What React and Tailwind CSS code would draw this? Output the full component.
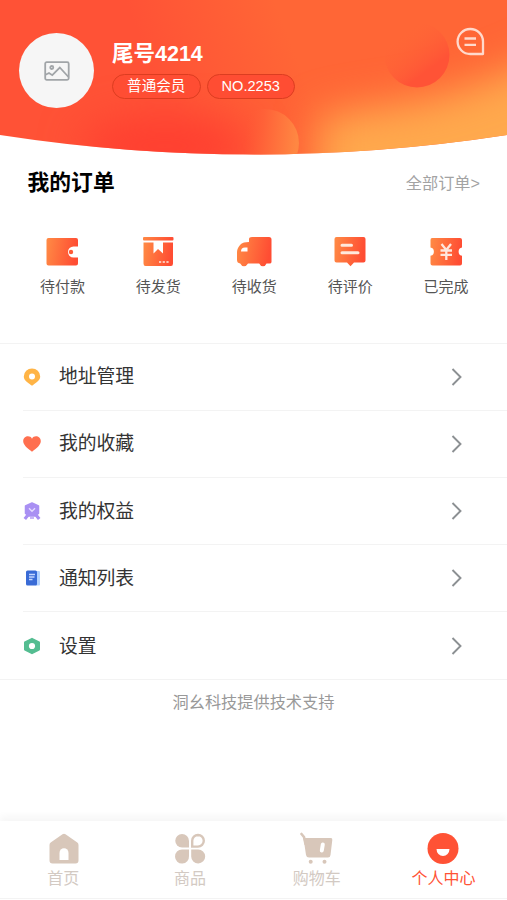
function HeaderArt() {
  return (
    <svg className="absolute inset-0 h-full w-full" viewBox="0 0 507 156" preserveAspectRatio="none">
      <defs>
        <linearGradient id="base" gradientUnits="userSpaceOnUse" x1="160" y1="90" x2="290" y2="40">
          <stop offset="0" stopColor="#ff5236" />
          <stop offset="1" stopColor="#ff6636" />
        </linearGradient>
        <linearGradient id="ball" x1="0.2" y1="0.1" x2="0.75" y2="0.85">
          <stop offset="0.1" stopColor="#ff6637" stopOpacity="0" />
          <stop offset="0.85" stopColor="#ff5336" />
        </linearGradient>
        <linearGradient id="ball2" x1="0" y1="0" x2="1" y2="0.1">
          <stop offset="0.25" stopColor="#ff5a36" stopOpacity="0" />
          <stop offset="0.5" stopColor="#ff6238" />
          <stop offset="1" stopColor="#ff8742" />
        </linearGradient>
        <filter id="soft" x="-50%" y="-80%" width="200%" height="260%" colorInterpolationFilters="sRGB">
          <feGaussianBlur stdDeviation="20" />
        </filter>
        <clipPath id="curve">
          <path d="M0 0H507V135Q380 154.500 254 154.500Q127 154.500 0 135Z" />
        </clipPath>
      </defs>
      <g clipPath="url(#curve)">
        <rect width="507" height="156" fill="url(#base)" />
        <ellipse cx="165" cy="146" rx="85" ry="28" fill="#ff3e30" filter="url(#soft)" />
        <path d="M318 220V118Q360 108 410 102Q470 92 570 44V220Z" fill="#ffa94d" filter="url(#soft)" />
        <circle cx="265" cy="143" r="34" fill="url(#ball2)" />
        <circle cx="417" cy="55" r="32.500" fill="url(#ball)" />
      </g>
    </svg>
  )
}

function IconDefs() {
  return (
    <svg className="absolute h-0 w-0">
      <defs>
        <linearGradient id="orange" x1="0" y1="0" x2="1" y2="0.150">
          <stop offset="0" stopColor="#ff8b45" />
          <stop offset="1" stopColor="#ff4d33" />
        </linearGradient>
      </defs>
    </svg>
  )
}

const orders = [
  {
    label: '待付款',
    icon: (
      <>
        <path fill="url(#orange)" d="M3.500 3H31Q33 3 33 5V11.500H28.500A5.500 5.500 0 0 0 28.500 22.500H33V28.500Q33 30.500 31 30.500H3.500Q1.500 30.500 1.500 28.500V5Q1.500 3 3.500 3Z" />
        <circle cx="26" cy="17" r="2.200" fill="#ff5a36" />
      </>
    ),
  },
  {
    label: '待发货',
    icon: (
      <>
        <rect x="2" y="2" width="30.500" height="3.600" rx="1" fill="url(#orange)" />
        <path fill="url(#orange)" d="M2.500 7.500H12.500V18.500L17 14L22 18.500V7.500H32V28.500Q32 31 30 31H4.500Q2.500 31 2.500 28.500Z" />
        <path d="M18 27H28" stroke="#ffc6b5" strokeWidth="1.800" strokeDasharray="2.200 1.500" />
      </>
    ),
  },
  {
    label: '待收货',
    icon: (
      <>
        <path fill="url(#orange)" d="M15 2H32Q34.500 2 34.500 4.500V27Q34.500 28.500 32.500 28.500H29.500Q28.500 31.200 26 31.200Q23.300 31.200 22.200 28.500H11Q9.500 31.200 7 31.200Q4.500 31.200 3.200 28.500Q0 28 0 25V17Q0 13 4 9Q6 7 12 7V4Q12 2 15 2Z" />
        <path d="M4 16.500Q4 12.500 8 12.500H10.500V16.500Z" fill="#fff" />
      </>
    ),
  },
  {
    label: '待评价',
    icon: (
      <>
        <path fill="url(#orange)" d="M3.500 2H30.500Q32.500 2 32.500 4V25.500Q32.500 27.500 30.500 27.500H21L17.500 31.200L14 27.500H3.500Q1.500 27.500 1.500 25.500V4Q1.500 2 3.500 2Z" />
        <path d="M9 10.300H18.500M9 17.800H25" stroke="#ffe9dc" strokeWidth="3" strokeLinecap="round" />
      </>
    ),
  },
  {
    label: '已完成',
    icon: (
      <>
        <path fill="url(#orange)" d="M3 3H31Q33 3 33 5V12.500A4 4.200 0 0 0 33 20.800V28.500Q33 30.500 31 30.500H3.500Q1.500 30.500 1.500 28.500V20.800A4 4.200 0 0 0 1.500 12.500V5Q1.500 3 3 3Z" />
        <path d="M12.500 9L17.300 15L22 9M11.500 15.500H23M11.500 19.800H23M17.300 15V25" stroke="#ffe6dc" strokeWidth="2.300" fill="none" />
      </>
    ),
  },
]

const menu = [
  {
    label: '地址管理',
    icon: (
      <>
        <path fill="#ffb446" d="M9 .5A8.200 8 0 0 1 17.200 8.500C17.200 12 14 14 9.800 17.300Q9 17.900 8.200 17.300C4 14 .8 12 .8 8.500A8.200 8 0 0 1 9 .5Z" />
        <circle cx="9" cy="8.400" r="3" fill="#fff" />
      </>
    ),
  },
  {
    label: '我的收藏',
    icon: <path fill="#ff6f4f" d="M9 3.700C11-.3 17.800.8 17.800 6.300C17.800 9.800 14 13 9 16.800C4 13 .2 9.800.2 6.300C.2.8 7 -.3 9 3.700Z" />,
  },
  {
    label: '我的权益',
    icon: (
      <>
        <path fill="none" stroke="#a990f3" strokeWidth="3.200" d="M5 13L1.800 17M13 13L16.200 17" />
        <path fill="#a990f3" stroke="#a990f3" strokeWidth="1.500" strokeLinejoin="round" d="M9 1L15.500 4V11.500L12 14H6L2.500 11.500V4Z" />
        <path d="M6 6.300L9 9.300L12 6.300" fill="none" stroke="#e5dcff" strokeWidth="1.400" />
        <path d="M7 16H11" fill="none" stroke="#c7b6f8" strokeWidth="2" />
      </>
    ),
  },
  {
    label: '通知列表',
    icon: (
      <>
        <rect x="12" y="2" width="5" height="14.500" rx="1" fill="#b3d3ff" />
        <rect x="3" y="1.500" width="11" height="15" rx="1.500" fill="#396bd6" />
        <path d="M6 5.500H12M6 8H11.500M6 10.500H9.500" stroke="#c3d6ff" strokeWidth="1.300" />
      </>
    ),
  },
  {
    label: '设置',
    icon: (
      <>
        <path fill="#54bd91" stroke="#54bd91" strokeWidth="2" strokeLinejoin="round" d="M9 1.800L16 5.500V12.500L9 16.200L2 12.500V5.500Z" />
        <circle cx="9" cy="9" r="3.100" fill="#fff" />
      </>
    ),
  },
]

const tabs = [
  {
    label: '首页',
    icon: (
      <>
        <path fill="#d8c7ba" d="M15.500 2.300Q17 1.300 18.500 2.300L30.300 10.500Q31.500 11.300 31.500 13V28.500Q31.500 31.500 28.500 31.500H5.500Q2.500 31.500 2.500 28.500V13Q2.500 11.300 3.700 10.500Z" />
        <path fill="#fff" d="M12.500 28V21A4.500 4.800 0 0 1 21.500 21V28Z" />
      </>
    ),
  },
  {
    label: '商品',
    icon: (
      <>
        <path fill="#d8c7ba" d="M8 2A7 7 0 0 1 15 9V15.500H8A6.750 6.750 0 0 1 8 2Z" />
        <path fill="none" stroke="#d8c7ba" strokeWidth="2.400" d="M24 3A5.800 5.800 0 0 1 24 14.600H18.200V8.800A5.800 5.800 0 0 1 24 3Z" />
        <path fill="#d8c7ba" d="M8 17.500H15V24A7 7 0 1 1 8 17.500Z" />
        <path fill="#d8c7ba" d="M17.200 17.500H24A7 7 0 1 1 17.200 24.500Z" />
      </>
    ),
  },
  {
    label: '购物车',
    icon: (
      <>
        <path d="M1.500 2L4 5L5.500 12" fill="none" stroke="#d8c7ba" strokeWidth="2.600" strokeLinecap="round" />
        <path fill="#d8c7ba" d="M3.500 6H31Q32.500 6 32.300 8L30.500 23Q30.200 25.500 28 25.500H9Q6.500 25.500 6 23Z" />
        <path d="M22.800 12.500L21.800 18.500" stroke="#fff" strokeWidth="4" strokeLinecap="round" />
        <circle cx="10.700" cy="29.700" r="2" fill="#d8c7ba" />
        <circle cx="24.500" cy="29.700" r="2" fill="#d8c7ba" />
      </>
    ),
  },
  {
    label: '个人中心',
    active: true,
    icon: (
      <>
        <circle cx="16" cy="16.500" r="15.500" fill="#ff5235" />
        <path d="M9.500 17H22.500A6.500 7 0 0 1 9.500 17Z" fill="#fff" />
      </>
    ),
  },
]

export default function App() {
  return (
    <div className="flex h-[900px] w-[507px] flex-col overflow-hidden bg-white font-['Liberation_Sans','Noto_Sans_CJK_SC',sans-serif]">
      <IconDefs />
      <header className="relative h-[156px] shrink-0">
        <HeaderArt />
        <div className="relative flex pt-8 pl-[19px]">
          <div className="mt-px flex h-[75px] w-[75px] items-center justify-center rounded-full bg-[#f6f6f6]">
            <svg width="26" height="20" viewBox="0 0 26 20" fill="none" stroke="#a1a5a8" strokeWidth="1.800">
              <rect x="1.200" y="1.200" width="23.500" height="17.600" rx="1.500" />
              <circle cx="7.800" cy="6.500" r="1.500" />
              <path d="M1.500 13.800L5 12L8.300 14.200L15.800 6.500L24.500 16" />
            </svg>
          </div>
          <div className="ml-[18px] pt-[7px]">
            <div className="text-[21.500px] leading-[30px] font-bold text-white">尾号4214</div>
            <div className="mt-[5px] flex gap-[6px] text-[14.600px] leading-none text-white">
              <span className="flex h-[25px] w-[88.500px] items-center justify-center rounded-full border border-[#dc3d20] bg-[#ff4d33]">普通会员</span>
              <span className="flex h-[25px] w-[88.500px] items-center justify-center rounded-full border border-[#dc3d20] bg-[#ff4d33]">NO.2253</span>
            </div>
          </div>
          <svg className="mt-[-5px] mr-[22px] ml-auto" width="29" height="29" viewBox="0 0 29 29" fill="none" stroke="#ffd9cc" strokeWidth="2.300">
            <path d="M27 27H14.500A12.700 12.500 0 1 1 27 14.500Z" strokeLinejoin="round" />
            <path d="M8.500 11.500H20M8.500 17.800H20" strokeWidth="2.300" />
          </svg>
        </div>
      </header>

      <section className="h-[186.500px] shrink-0">
        <div className="flex h-[54px] items-center justify-between pr-[27px] pl-[27.500px]">
          <h2 className="pt-px text-[21.800px] font-bold text-black">我的订单</h2>
          <span className="text-[16.200px] text-[#a3a3a3]">全部订单&gt;</span>
        </div>
        <div className="grid grid-cols-5 pt-[25px] pr-[13px] pl-[14.500px]">
          {orders.map((o) => (
            <div key={o.label} className="flex flex-col items-center">
              <svg width="35" height="33" viewBox="0 0 35 33">{o.icon}</svg>
              <span className="mt-[8px] text-[15px] leading-[22px] text-[#555]">{o.label}</span>
            </div>
          ))}
        </div>
      </section>

      <ul className="shrink-0 border-y border-[#f3f3f3]">
        {menu.map((m, i) => (
          <li key={m.label} className={`ml-[23px] flex h-[67.200px] items-center pt-[1.500px] ${i < menu.length - 1 ? 'border-b border-[#f3f3f3]' : ''}`}>
            <svg className="-mt-px -ml-[0.5px]" width="18" height="18" viewBox="0 0 18 18">{m.icon}</svg>
            <span className="ml-[18.500px] text-[18.800px] text-[#333]">{m.label}</span>
            <svg className="-mt-px mr-[43px] ml-auto" width="14" height="18" viewBox="0 0 14 18" fill="none" stroke="#8c9093" strokeWidth="1.900">
              <path d="M2.500 1L10.500 9L2.500 17" />
            </svg>
          </li>
        ))}
      </ul>

      <p className="pt-[10px] text-center text-[16.200px] leading-6 text-[#999]">洞幺科技提供技术支持</p>

      <nav className="mt-auto mb-px grid h-[78px] shrink-0 grid-cols-4 border-b border-[#f3f3f3] bg-white shadow-[0_-5px_7px_rgba(0,0,0,0.035)]">
        {tabs.map((t) => (
          <div key={t.label} className="flex flex-col items-center pt-[11px]">
            <svg width="33" height="33" viewBox="0 0 33 33">{t.icon}</svg>
            <span className={`mt-[2px] text-[16px] leading-6 ${t.active ? 'text-[#ff5235]' : 'text-[#d3cac3]'}`}>{t.label}</span>
          </div>
        ))}
      </nav>
    </div>
  )
}
